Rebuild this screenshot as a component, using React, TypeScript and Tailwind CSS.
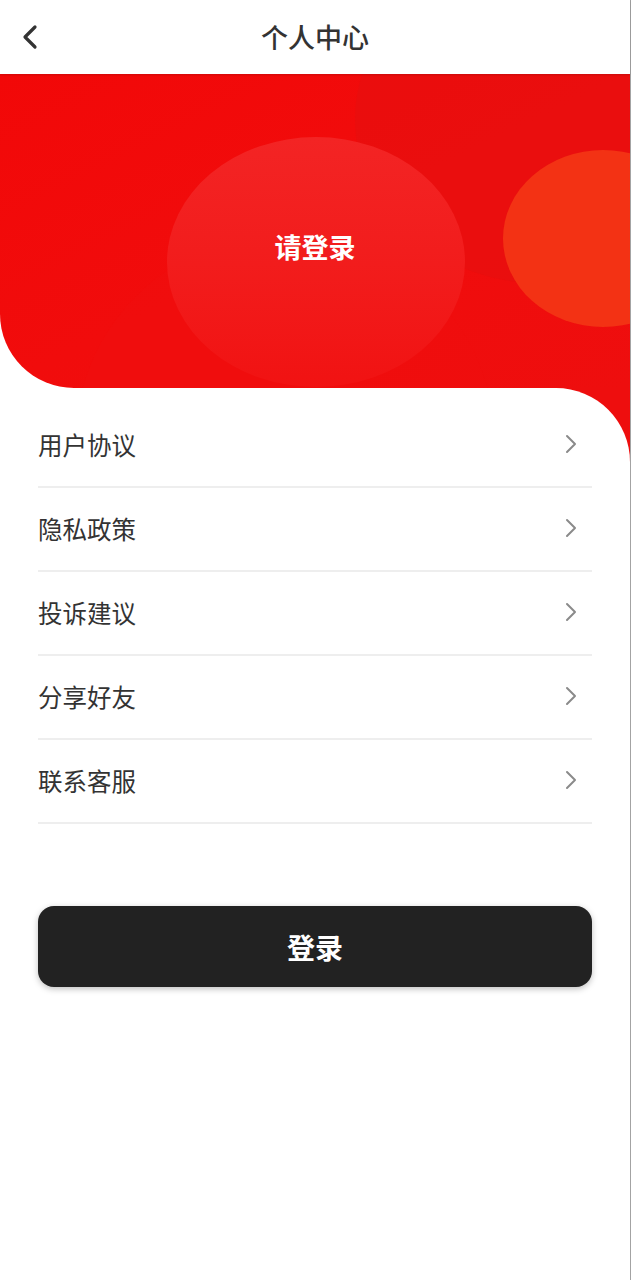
import React from "react";

const items = ["用户协议", "隐私政策", "投诉建议", "分享好友", "联系客服"];

function Chevron() {
  return (
    <svg width="14" height="20" viewBox="0 0 14 20" fill="none">
      <path d="M3 2 L11 10 L3 18" stroke="#8a8a8a" strokeWidth="2" strokeLinecap="round" strokeLinejoin="round" />
    </svg>
  );
}

export default function App() {
  return (
    <div
      className="w-[631px] min-h-[1280px] bg-white border-r border-[#a3a3a3]"
      style={{ fontFamily: '"Noto Sans CJK SC", "Noto Sans", sans-serif' }}
    >
      {/* Header */}
      <div className="relative z-10 h-[74px] flex items-center justify-center bg-white shadow-[0_1px_2px_rgba(0,0,0,0.15)]">
        <div className="absolute left-[20px] top-[24px]">
          <svg width="20" height="26" viewBox="0 0 20 26" fill="none">
            <path d="M15 3 L5 13 L15 23" stroke="#333" strokeWidth="3.2" strokeLinecap="round" strokeLinejoin="round" />
          </svg>
        </div>
        <div className="text-[27px] text-[#333] font-medium">个人中心</div>
      </div>

      {/* Red banner */}
      <div className="relative h-[314px] overflow-hidden rounded-bl-[74px] bg-gradient-to-br from-[#f20808] via-[#f10c0c] to-[#ee0e0e]">
        <div className="absolute left-[355px] top-[-120px] w-[380px] h-[330px] rounded-[50%] bg-[#e41010]/50" />
        <div className="absolute left-[75px] top-[160px] w-[420px] h-[420px] rounded-[50%] bg-[#f00f10]/40" />
        <div className="absolute left-[167px] top-[63px] w-[298px] h-[250px] rounded-[50%] bg-gradient-to-b from-[#f32424] to-[#f11212]" />
        <div className="absolute left-[503px] top-[76px] w-[200px] h-[177px] rounded-[50%] bg-[#f33214]" />
        <div className="relative h-full flex items-center justify-center pt-[32px]">
          <span className="text-[27px] font-bold text-white">请登录</span>
        </div>
      </div>

      {/* List card */}
      <div className="relative">
        <div className="absolute right-0 top-0 w-[90px] h-[90px] bg-[#ee0e0e]" />
        <div className="relative bg-white rounded-tr-[74px] pt-[16px] px-[38px]">
          {items.map((t) => (
            <div key={t} className="h-[84px] flex items-center justify-between border-b-2 border-[#eeeeee]">
              <span className="text-[24.5px] text-[#333]">{t}</span>
              <div className="mr-[14px] mt-[-2px]">
                <Chevron />
              </div>
            </div>
          ))}
          <div className="pt-[82px]">
            <div className="h-[81px] rounded-[16px] bg-[#222222] flex items-center justify-center shadow-[0_2px_6px_rgba(0,0,0,0.25)]">
              <span className="text-[28px] font-bold text-white">登录</span>
            </div>
          </div>
        </div>
      </div>
    </div>
  );
}
